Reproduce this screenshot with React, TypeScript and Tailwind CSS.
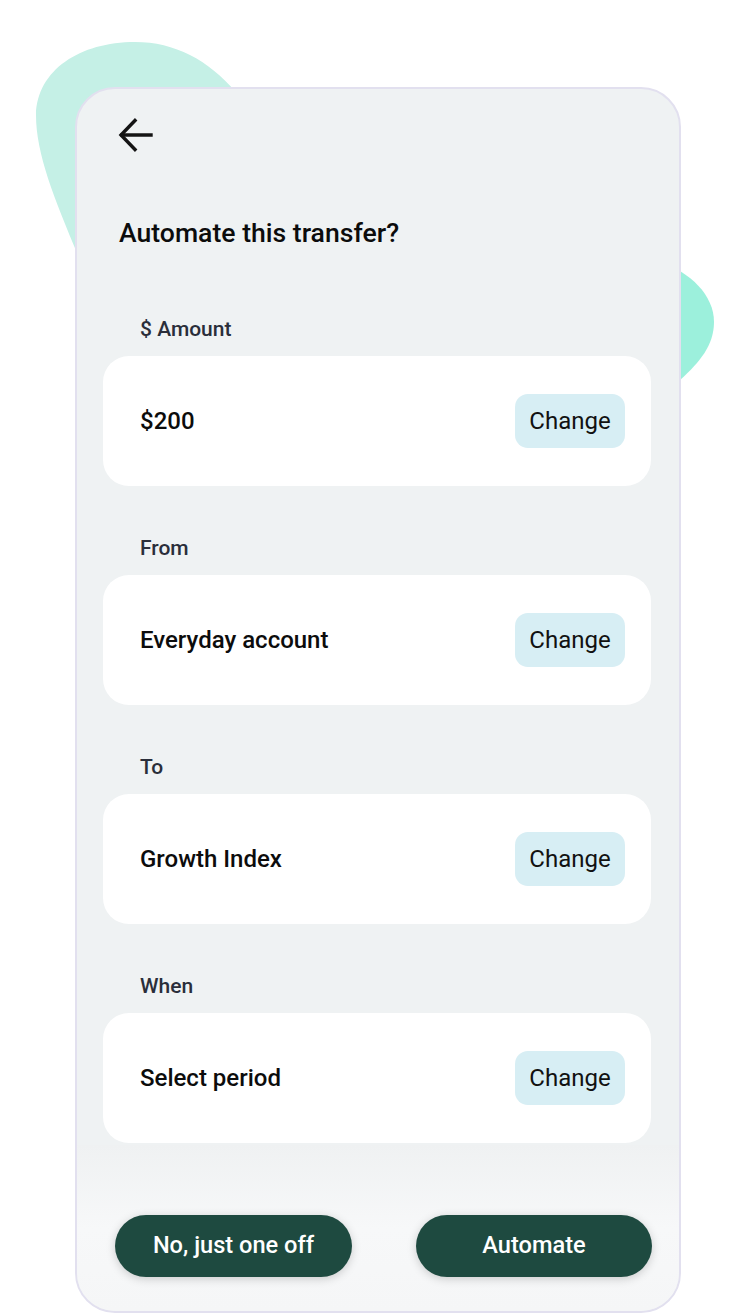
import React from 'react'

const rows = [
  { label: '$ Amount', value: '$200' },
  { label: 'From', value: 'Everyday account' },
  { label: 'To', value: 'Growth Index' },
  { label: 'When', value: 'Select period' },
]

function Blobs() {
  return (
    <svg className="pointer-events-none absolute left-0 top-0" width="735" height="420" viewBox="0 0 735 420">
      <path
        d="M 80 260 C 55 200, 36 155, 36 115 C 37 70, 80 42, 135 42 C 175 42, 208 60, 236 92 L 320 220 L 80 260 Z"
        fill="#c5f0e6"
      />
      <path
        d="M 660 262 C 690 272, 714 295, 714 322 C 714 345, 700 362, 680 380 L 660 380 Z"
        fill="#9cf0dc"
      />
    </svg>
  )
}

function BackArrow() {
  return (
    <svg width="36" height="36" viewBox="0 0 36 36" fill="none" stroke="#141414" strokeWidth="3.4" strokeLinecap="square">
      <path d="M33 18 H4" />
      <path d="M17 3.5 L3 18 L17 32.5" />
    </svg>
  )
}

export default function App() {
  return (
    <div className="relative min-h-[1314px] w-[735px] overflow-hidden bg-white" style={{ fontFamily: 'Roboto, "Noto Sans", sans-serif' }}>
      <Blobs />
      <div className="relative z-10 ml-[75px] mt-[87px] flex h-[1226px] w-[606px] flex-col overflow-hidden rounded-[40px] border-2 border-[#e2e0ef] bg-[#eff2f3]">
        <div className="px-[26px]">
          <div className="ml-[15px] mt-[28px] h-[36px] w-[36px]">
            <BackArrow />
          </div>
          <h1 className="ml-[16px] mt-[65px] text-[26.6px] font-medium leading-[30px] text-[#0c0c0c]">
            Automate this transfer?
          </h1>

          <div className="mt-[69px] flex flex-col gap-[50px]">
            {rows.map((r) => (
              <div key={r.label} className="flex flex-col">
                <div className="ml-[37px] text-[21px] font-medium leading-[24px] text-[#2a2e3a]">{r.label}</div>
                <div className="mt-[15px] flex h-[130px] w-[548px] items-center justify-between rounded-[26px] bg-white pl-[37px] pr-[26px]">
                  <span className="text-[24px] font-medium text-[#0c0c0c]">{r.value}</span>
                  <button className="flex h-[54px] w-[110px] items-center justify-center rounded-[13px] bg-[#d7eef4] text-[24px] text-[#111]">
                    Change
                  </button>
                </div>
              </div>
            ))}
          </div>
        </div>

        <div className="mt-[2px] flex flex-1 items-start justify-between bg-gradient-to-b from-[#eff1f2] via-[#f7f8f9] to-[#f5f6f7] pl-[38px] pr-[27px] pt-[70px]">
          <button className="flex h-[62px] w-[237px] items-center justify-center rounded-full bg-[#1e4a40] text-[23.6px] font-medium text-white shadow-[0_2px_10px_rgba(0,0,0,0.18)]">
            No, just one off
          </button>
          <button className="flex h-[62px] w-[236px] items-center justify-center rounded-full bg-[#1e4a40] text-[23.6px] font-medium text-white shadow-[0_2px_10px_rgba(0,0,0,0.18)]">
            Automate
          </button>
        </div>
      </div>
    </div>
  )
}
